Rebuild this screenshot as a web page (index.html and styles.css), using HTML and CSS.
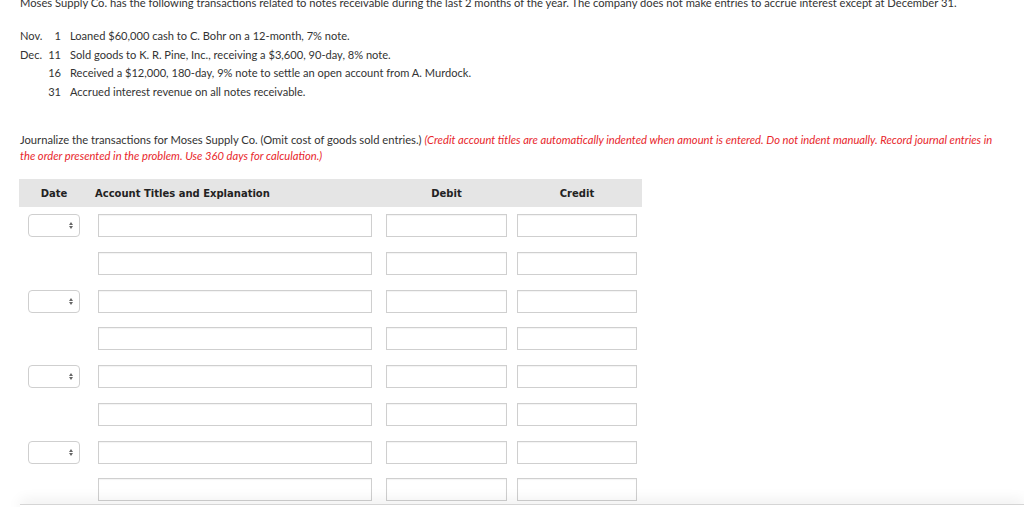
FILE: index.html
```html
<!DOCTYPE html>
<html>
<head>
<meta charset="utf-8">
<link rel="stylesheet" href="styles.css">
</head>
<body>
<div class="page">
  <p class="intro">Moses Supply Co. has the following transactions related to notes receivable during the last 2 months of the year. The company does not make entries to accrue interest except at December 31.</p>
  <div class="tx">
    <div class="txrow"><span class="mon">Nov.</span><span class="day">1</span><span class="desc">Loaned $60,000 cash to C. Bohr on a 12-month, 7% note.</span></div>
    <div class="txrow"><span class="mon">Dec.</span><span class="day">11</span><span class="desc">Sold goods to K. R. Pine, Inc., receiving a $3,600, 90-day, 8% note.</span></div>
    <div class="txrow"><span class="mon"></span><span class="day">16</span><span class="desc">Received a $12,000, 180-day, 9% note to settle an open account from A. Murdock.</span></div>
    <div class="txrow"><span class="mon"></span><span class="day">31</span><span class="desc">Accrued interest revenue on all notes receivable.</span></div>
  </div>
  <p class="instr">Journalize the transactions for Moses Supply Co. (Omit cost of goods sold entries.) <em class="red">(Credit account titles are automatically indented when amount is entered. Do not indent manually. Record journal entries in the order presented in the problem. Use 360 days for calculation.)</em></p>

  <div class="journal">
    <div class="head">
      <div class="h-date">Date</div>
      <div class="h-acct">Account Titles and Explanation</div>
      <div class="h-debit">Debit</div>
      <div class="h-credit">Credit</div>
    </div>
    <div class="rows">
      <div class="row"><div class="sel"><span class="spin"></span></div><div class="inp acct"></div><div class="inp debit"></div><div class="inp credit"></div></div>
      <div class="row"><div class="nosel"></div><div class="inp acct"></div><div class="inp debit"></div><div class="inp credit"></div></div>
      <div class="row"><div class="sel"><span class="spin"></span></div><div class="inp acct"></div><div class="inp debit"></div><div class="inp credit"></div></div>
      <div class="row"><div class="nosel"></div><div class="inp acct"></div><div class="inp debit"></div><div class="inp credit"></div></div>
      <div class="row"><div class="sel"><span class="spin"></span></div><div class="inp acct"></div><div class="inp debit"></div><div class="inp credit"></div></div>
      <div class="row"><div class="nosel"></div><div class="inp acct"></div><div class="inp debit"></div><div class="inp credit"></div></div>
      <div class="row"><div class="sel"><span class="spin"></span></div><div class="inp acct"></div><div class="inp debit"></div><div class="inp credit"></div></div>
      <div class="row"><div class="nosel"></div><div class="inp acct"></div><div class="inp debit"></div><div class="inp credit"></div></div>
    </div>
  </div>
</div>
<div class="footer"></div>
</body>
</html>
```

FILE: styles.css
```css
html, body {
  margin: 0;
  padding: 0;
  background: #fff;
  overflow: hidden;
}
body {
  font-family: Lato, "Open Sans", sans-serif;
  color: #333;
  width: 1024px;
  height: 507px;
  position: relative;
}
.page {
  padding-left: 20px;
  margin-top: -4px;
}
.intro {
  margin: 0;
  font-size: 11.2px;
  line-height: 14px;
  white-space: nowrap;
}
.tx {
  margin-top: 17px;
  font-size: 11.1px;
}
.txrow {
  display: flex;
  height: 18.6px;
  line-height: 18.6px;
}
.mon { width: 28px; flex: none; }
.day { width: 13px; text-align: right; flex: none; }
.desc { margin-left: 9px; }
.instr {
  margin: 31px 0 0 0;
  font-size: 11.2px;
  line-height: 16px;
  width: 985px;
}
.red {
  color: #e8262b;
}
.journal {
  margin-top: 15px;
  margin-left: -1px;
  width: 623px;
}
.head {
  display: flex;
  height: 28px;
  align-items: center;
  background: #e5e5e5;
  font-family: "DejaVu Sans", Verdana, sans-serif;
  font-weight: bold;
  font-size: 10px;
  color: #222;
}
.h-date { width: 70px; text-align: center; }
.h-acct { margin-left: 6px; width: 285px; }
.h-debit { width: 121px; margin-left: 6px; text-align: center; }
.h-credit { width: 120px; margin-left: 10px; text-align: center; }
.rows {
  display: flex;
  flex-direction: column;
  gap: 14.7px;
  margin-top: 7px;
}
.row {
  display: flex;
  height: 23px;
}
.sel, .nosel {
  margin-left: 9px;
  width: 52px;
  height: 23px;
  box-sizing: border-box;
  flex: none;
}
.sel {
  border: 1px solid #cfcfcf;
  border-radius: 4px;
  position: relative;
  background: #fff;
}
.spin {
  position: absolute;
  right: 6px;
  top: 7px;
  width: 0;
  height: 0;
  border-left: 2.5px solid transparent;
  border-right: 2.5px solid transparent;
  border-bottom: 3px solid #666;
}
.spin::after {
  content: "";
  position: absolute;
  left: -2.5px;
  top: 4px;
  border-left: 2.5px solid transparent;
  border-right: 2.5px solid transparent;
  border-top: 3px solid #666;
}
.inp {
  height: 23px;
  box-sizing: border-box;
  border: 1px solid #cfcfcf;
  box-shadow: inset 0 1px 1px rgba(0,0,0,0.05);
  background: #fff;
  flex: none;
}
.acct { margin-left: 18px; width: 274px; }
.debit { margin-left: 14px; width: 121px; }
.credit { margin-left: 10px; width: 120px; }
.footer {
  position: absolute;
  left: 20px;
  right: 0;
  bottom: -9px;
  height: 11px;
  border-top: 1px solid #d5d5d5;
  background: #fff;
  box-shadow: 0 -4px 14px rgba(0,0,0,0.07);
}
```
